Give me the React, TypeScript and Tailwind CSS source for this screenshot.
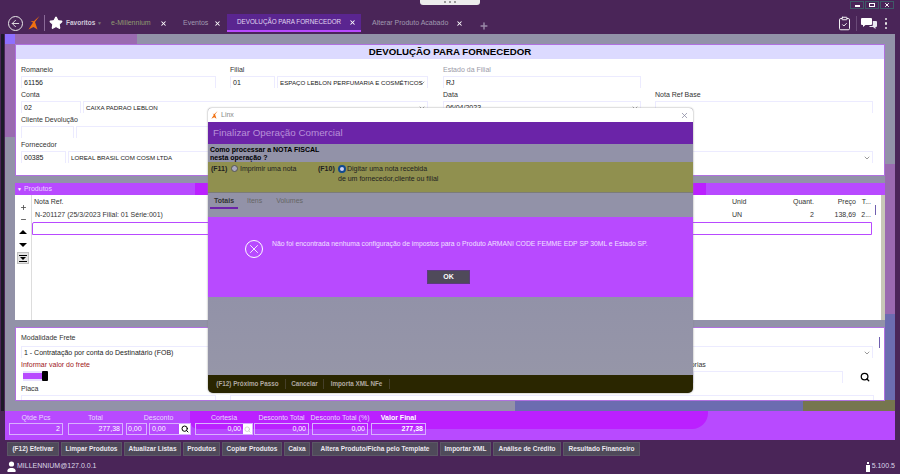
import React from "react";
import { X, Plus, Minus, ChevronDown, Search, Star, ArrowLeft, ClipboardCheck } from "lucide-react";

const F = ({ label, className = "", muted = false, children }: { label: string; className?: string; muted?: boolean; children?: React.ReactNode }) => (
  <div className={"flex flex-col min-w-0 " + className}>
    <div className={"h-[12px] text-[7px] leading-[12px] whitespace-nowrap " + (muted ? "text-[#9a9aa8]" : "text-[#333]")}>{label}</div>
    <div className="flex gap-[2px] h-[13px]">{children}</div>
  </div>
);

const Box = ({ v = "", className = "", chevron = false }: { v?: string; className?: string; chevron?: boolean }) => (
  <div className={"relative h-[12px] border-t border-l border-r border-[#ecebff] pl-[2px] leading-[12px] text-[#222] whitespace-nowrap overflow-hidden " + (className.includes("text-[") ? "" : "text-[7px] ") + className}>
    {v}
    {chevron && <ChevronDown size={8} strokeWidth={2} className="absolute right-[1px] top-[2px] text-[#666]" />}
  </div>
);

const Logo = ({ w, h }: { w: number; h: number }) => (
  <svg width={w} height={h} viewBox="0 0 12 14">
    <path d="M11.5 0 L7 6 L9.5 13.5 L5.5 11 L0.5 13.5 L5 6.5 L2.5 5 L5.8 5.2 Z" fill="#f07010" />
  </svg>
);

const buttons: [string, string][] = [
  ["(F12) Efetivar", "w-[52px]"],
  ["Limpar Produtos", "w-[61px]"],
  ["Atualizar Listas", "w-[57px]"],
  ["Produtos", "w-[37px]"],
  ["Copiar Produtos", "w-[60px]"],
  ["Caixa", "w-[26px]"],
  ["Altera Produto/Ficha pelo Template", "w-[126px]"],
  ["Importar XML", "w-[51px]"],
  ["Análise de Crédito", "w-[68px]"],
  ["Resultado Financeiro", "w-[77px]"],
];

const SumField = ({ l, v, w, bold = false }: { l: string; v: string; w: string; bold?: boolean }) => (
  <div className={"flex flex-col items-center shrink-0 " + w}>
    <div className={"h-[11px] text-[7px] leading-[11px] whitespace-nowrap " + (bold ? "text-white font-bold" : "text-[#e8d8ff]")}>{l}</div>
    <div className={"w-full h-[12px] border border-[#d8b0ff] text-right pr-[2px] text-[7px] leading-[10px] " + (bold ? "text-white font-bold" : "text-white")}>{v}</div>
  </div>
);

export default function App() {
  return (
    <div className="relative w-[900px] h-[474px] overflow-hidden flex flex-col bg-[#4a2558] font-['Liberation_Sans',sans-serif]">
      {/* title bar */}
      <div className="relative h-[34px] shrink-0 flex items-end pb-[2px] pl-[8px]">
        <div className="absolute top-0 left-[420px] w-[60px] h-[5px] bg-[#ececec] rounded-b-[3px] flex justify-center gap-[3px] pt-[1px]">
          <span className="w-[2px] h-[2px] bg-[#999]" />
          <span className="w-[2px] h-[2px] bg-[#999]" />
          <span className="w-[2px] h-[2px] bg-[#999]" />
        </div>
        <div className="absolute top-[1px] right-[6px] flex gap-[1px]">
          {[0, 1, 2].map((s) => (
            <div key={s} className="w-[14px] h-[8px] border border-[#3f5a68] flex items-center justify-center">
              {s === 0 && <div className="w-[5px] h-[2px] bg-white mt-[2px]" />}
              {s === 1 && <div className="w-[6px] h-[4px] border border-white" />}
              {s === 2 && <X size={6} strokeWidth={4} className="text-white" />}
            </div>
          ))}
        </div>
        <div className="w-[15px] h-[15px] mb-[1px] rounded-full border border-[#e8e8e8] flex items-center justify-center shrink-0">
          <ArrowLeft size={11} className="text-[#e8e8e8]" />
        </div>
        <div className="ml-[5px] mb-[2px] shrink-0 w-[12px] h-[14px] flex"><Logo w={12} h={14} /></div>
        <div className="w-[1px] h-[16px] bg-[#8a6a98] ml-[4px] mb-[1px]" />
        <Star size={14} fill="#fff" className="text-white ml-[4px] mb-[2px] shrink-0" />
        <div className="ml-[3px] w-[45px] h-[18px] text-[#d0c8d8] text-[6.5px] font-bold leading-[18px] shrink-0 whitespace-nowrap">
          Favoritos <span className="text-[5px] text-[#777]">▼</span>
        </div>
        <div className="flex items-center justify-between h-[18px] w-[72px] pr-[16px] shrink-0">
          <span className="text-[7px] whitespace-nowrap text-[#8f9b70]">e-Millennium</span>
          <X size={7} strokeWidth={3.5} className="text-white shrink-0" />
        </div>
        <div className="flex items-center justify-between h-[18px] w-[44px] pr-[6px] shrink-0">
          <span className="text-[7px] whitespace-nowrap text-[#a09ab0]">Eventos</span>
          <X size={7} strokeWidth={3.5} className="text-white shrink-0" />
        </div>
        <div className="flex items-center justify-between h-[18px] w-[134px] bg-[#5a2590] border-b-[2px] border-[#b84aff] pl-[10px] pr-[5px] shrink-0">
          <span className="text-[6.3px] text-[#e0d8f0] whitespace-nowrap">DEVOLUÇÃO PARA FORNECEDOR</span>
          <X size={7} strokeWidth={3.5} className="text-white shrink-0" />
        </div>
        <div className="flex items-center h-[18px] pl-[11px] shrink-0">
          <span className="text-[7px] text-[#a09ab0] whitespace-nowrap w-[84px]">Alterar Produto Acabado</span>
          <X size={7} strokeWidth={3.5} className="text-white shrink-0" />
          <Plus size={10} strokeWidth={3.5} className="text-[#9a8aa8] ml-[16px] mt-[5px] shrink-0" />
        </div>
        <div className="ml-auto flex items-center pr-[13px] mb-[1px] text-white">
          <ClipboardCheck size={15} strokeWidth={1.5} />
          <div className="w-[1px] h-[15px] bg-[#6a4a78] ml-[4px] mr-[4px]" />
          <svg width="16" height="11" viewBox="0 0 16 11" className="mr-[8px]">
            <path d="M1 0h9a1 1 0 0 1 1 1v5a1 1 0 0 1-1 1H4.5L2 9V7H1a1 1 0 0 1-1-1V1a1 1 0 0 1 1-1Z" fill="#fff" />
            <path d="M11.8 3H15a1 1 0 0 1 1 1v4a1 1 0 0 1-1 1h-.5v2l-2.5-2H8.5V8H11a1 1 0 0 0 .8-1Z" fill="#e8e8f0" />
          </svg>
          <div className="flex flex-col gap-[2px]">
            <span className="w-[2.5px] h-[2.5px] bg-[#e8e8e8] rounded-full" />
            <span className="w-[2.5px] h-[2.5px] bg-[#e8e8e8] rounded-full" />
            <span className="w-[2.5px] h-[2.5px] bg-[#e8e8e8] rounded-full" />
          </div>
        </div>
      </div>

      {/* content */}
      <div className="flex h-[377px] shrink-0">
        <div className="w-[1px]" />
        <div className="w-[3px] bg-[#1c1a28]" />
        <div className="w-[1px]" />
        <div className="w-[890px] flex bg-[#9292a8]">
          <div className="w-[10px] bg-[linear-gradient(to_bottom,#8f6fff_0,#8f6fff_10px,#9a6ab0_10px,#9a6ab0_103px,#9292a8_103px)]" />
          <div className="w-[870px] flex flex-col">
            <div className="h-[10px] flex">
              <div className="w-[122px] bg-[#9a6ab0]" />
            </div>
            {/* panel 1 */}
            <div className="h-[132px] bg-white border border-[#b070e0] shrink-0">
              <div className="h-[14px] bg-[#dcdaff] text-center text-[9.7px] font-bold leading-[14px] text-black">DEVOLUÇÃO PARA FORNECEDOR</div>
              <div className="pl-[5px] pt-[5px] grid grid-cols-[209px_213px_212px_218px] auto-rows-[25px]">
                <F label="Romaneio"><Box v="61156" className="w-[195px]" /></F>
                <F label="Filial"><Box v="01" className="w-[45px]" /><Box v="ESPAÇO LEBLON PERFUMARIA E COSMÉTICOS" chevron className="w-[151px] text-[6.2px]" /></F>
                <F label="Estado da Filial" muted><Box v="RJ" className="w-[198px]" /></F>
                <div />
                <F label="Conta" className="col-span-2"><Box v="02" className="w-[60px]" /><Box v="CAIXA PADRAO LEBLON" chevron className="w-[345px] text-[6.2px]" /></F>
                <F label="Data"><Box v="06/04/2023" chevron className="w-[198px]" /></F>
                <F label="Nota Ref Base"><Box className="w-[218px]" /></F>
                <F label="Cliente Devolução" className="col-span-4"><Box className="w-[53px]" /><Box className="w-[340px]" /></F>
                <F label="Fornecedor" className="col-span-4"><Box v="00385" className="w-[45px]" /><Box v="LOREAL BRASIL COM COSM LTDA" chevron className="w-[805px] text-[6.2px]" /></F>
              </div>
            </div>
            <div className="h-[7px] shrink-0" />
            {/* produtos */}
            <div className="h-[137px] shrink-0 flex flex-col">
              <div className="h-[12px] bg-[#b84aff] flex items-center pl-[2px] shrink-0">
                <span className="text-white text-[5px] leading-[12px]">▼</span>
                <span className="text-[7px] text-[#e8d8ff] leading-[12px] ml-[2px] w-[171px]">Produtos</span>
                <div className="w-[511px] h-full bg-[#bb20ff]" />
              </div>
              <div className="flex-1 flex bg-white min-h-0">
                <div className="w-[17px] shrink-0 border-r border-[#ddd] flex flex-col items-center pt-[9px] text-black">
                  <Plus size={7} strokeWidth={3} className="text-[#555] mb-[5px]" />
                  <Minus size={7} strokeWidth={3} className="text-[#555] mb-[7px]" />
                  <div className="w-0 h-0 border-x-[4px] border-x-transparent border-b-[4px] border-b-black mb-[9px]" />
                  <div className="w-0 h-0 border-x-[4px] border-x-transparent border-t-[4px] border-t-black mb-[5px]" />
                  <div className="w-[12px] h-[12px] bg-[#e4e4e4] border border-[#c0c0c0] flex flex-col items-center justify-center gap-[1px]">
                    <div className="w-[8px] h-[1px] bg-black" />
                    <div className="w-0 h-0 border-x-[3px] border-x-transparent border-t-[3px] border-t-black" />
                    <div className="w-[8px] h-[1px] bg-black" />
                  </div>
                </div>
                <div className="flex-1 flex flex-col min-w-0">
                  <div className="h-[13px] flex items-center text-[7px] text-[#333] pl-[2px] mt-[1px]">
                    <span className="w-[698px]">Nota Ref.</span>
                    <span className="w-[49px]">Unid</span>
                    <span className="w-[33px] text-right">Quant.</span>
                    <span className="w-[42px] text-right">Preço</span>
                    <span className="w-[15px] text-right">T...</span>
                  </div>
                  <div className="h-[13px] flex items-center text-[7px] text-[#333] pl-[3px]">
                    <span className="w-[697px]">N-201127 (25/3/2023 Filial: 01 Série:001)</span>
                    <span className="w-[49px]">UN</span>
                    <span className="w-[33px] text-right">2</span>
                    <span className="w-[42px] text-right">138,69</span>
                    <span className="w-[15px] text-right">2...</span>
                  </div>
                  <div className="h-[13px] w-[840px] border border-[#b84aff] rounded-tl-[2px]" />
                </div>
                <div className="w-[14px] shrink-0 flex">
                  <div className="w-[1px] h-[10px] bg-[#7060b0] mt-[10px] ml-[4px]" />
                  <div className="ml-auto w-[4px] bg-[#c8c8b8]" />
                </div>
              </div>
            </div>
            <div className="h-[7px] shrink-0" />
            {/* bottom panel */}
            <div className="h-[74px] shrink-0 bg-white border border-[#b070e0] pl-[5px] relative overflow-hidden">
              <div className="h-[18px] pt-[4px] text-[7px] leading-[12px] text-[#333]">Modalidade Frete</div>
              <Box v="1 - Contratação por conta do Destinatário (FOB)" chevron className="w-[852px] h-[12px] leading-[11px]" />
              <div className="flex mt-[1px]">
                <div className="w-[672px] shrink-0">
                  <div className="h-[11px] text-[7px] leading-[11px] text-[#a02020]">Informar valor do frete</div>
                  <div className="mt-[1px] ml-[2px] w-[25px] h-[10px] bg-[#e8e0ff] flex items-center">
                    <div className="w-[19px] h-[6px] bg-[#b84aff]" />
                    <div className="w-[6px] h-[10px] bg-black rounded-[1px]" />
                  </div>
                </div>
                <div className="flex flex-col">
                  <div className="h-[11px] text-[7px] leading-[11px] text-[#333] -ml-[21px] whitespace-nowrap">Categorias</div>
                  <div className="flex items-center mt-[1px]">
                    <Box className="w-[150px]" />
                    <Search size={10} strokeWidth={3} className="text-black ml-[17px]" />
                  </div>
                </div>
              </div>
              <div className="h-[10px] text-[7px] leading-[10px] text-[#333] mt-[1px]">Placa</div>
              <div className="flex gap-[14px] mt-[1px]">
                <Box className="w-[195px]" />
                <Box className="w-[644px]" />
              </div>
              <div className="absolute right-[4px] top-[9px] w-[1px] h-[11px] bg-[#7060b0]" />
            </div>
            <div className="flex-1 flex">
              <div className="w-[500px]" />
              <div className="flex-1 bg-[#6c6cb0]" />
              <div className="w-[82px] bg-[#76764f]" />
            </div>
          </div>
          <div className="w-[10px] bg-[linear-gradient(to_bottom,#9292a8_0,#9292a8_130px,#9a6ab0_130px,#9a6ab0_280px,#6c6cb0_280px,#6c6cb0_366px,#76764f_366px)]" />
        </div>
      </div>

      {/* summary */}
      <div className="relative ml-[5px] w-[890px] h-[29px] shrink-0 bg-[#b84aff] overflow-hidden">
        <div className="absolute left-[185px] top-0 w-[518px] h-[18px] bg-[#bb20ff] rounded-br-[16px] rounded-bl-[8px]" />
        <div className="relative flex pl-[4px] pt-[1px]">
          <SumField l="Qtde Pcs" v="2" w="w-[54px]" />
          <SumField l="Total" v="277,38" w="w-[55px] ml-[5px]" />
          <div className="flex flex-col shrink-0 w-[65px] ml-[3px]">
            <div className="h-[11px] text-center text-[7px] leading-[11px] text-[#e8d8ff]">Desconto</div>
            <div className="flex gap-[2px]">
              <div className="w-[21px] h-[12px] border border-[#d8b0ff] pl-[1px] text-[7px] leading-[10px] text-white">0,00</div>
              <div className="w-[42px] h-[12px] border border-[#d8b0ff] pl-[2px] text-[7px] leading-[10px] text-white flex justify-between">
                0,00
                <span className="bg-white w-[11px] h-[10px] flex items-center justify-center"><Search size={8} strokeWidth={3} className="text-black" /></span>
              </div>
            </div>
          </div>
          <div className="flex flex-col items-center shrink-0 w-[58px] ml-[4px]">
            <div className="h-[11px] text-[7px] leading-[11px] text-[#e8d8ff]">Cortesia</div>
            <div className="w-full h-[12px] border border-[#d8b0ff] text-[7px] leading-[10px] text-white flex justify-end gap-[2px]">
              0,00
              <span className="bg-white w-[9px] h-[10px] flex items-center justify-center"><Search size={7} strokeWidth={2} className="text-[#bbb]" /></span>
            </div>
          </div>
          <SumField l="Desconto Total" v="0,00" w="w-[55px] ml-[1px]" />
          <SumField l="Desconto Total (%)" v="0,00" w="w-[56px] ml-[3px]" />
          <SumField l="Valor Final" v="277,38" w="w-[55px] ml-[3px]" bold />
        </div>
      </div>

      {/* buttons */}
      <div className="h-[14px] mt-[2px] shrink-0 flex items-center pl-[7px] gap-[2px]">
        {buttons.map(([b, w]) => (
          <div key={b} className={"h-[14px] shrink-0 bg-[#4f4a5a] border border-[#5c5766] text-[#ece8f0] text-[6.5px] font-bold leading-[12px] text-center whitespace-nowrap overflow-hidden " + w}>{b}</div>
        ))}
      </div>

      {/* status */}
      <div className="flex-1 flex items-center pl-[7px] pr-[3px] pt-[3px] text-[#ddd8e8] text-[7px]">
        <svg width="9" height="11" viewBox="0 0 9 11" className="shrink-0">
          <circle cx="4.5" cy="3" r="2.6" fill="#fff" />
          <path d="M0.5 11V9.2C0.5 7.5 3 7 4.5 7S8.5 7.5 8.5 9.2V11Z" fill="#fff" />
        </svg>
        <span className="ml-[1px]">MILLENNIUM@127.0.0.1</span>
        <svg width="4" height="10" viewBox="0 0 4 10" className="ml-auto shrink-0">
          <rect x="1" y="0" width="2" height="2" fill="#fff" />
          <rect x="0" y="3" width="4" height="7" fill="#fff" />
        </svg>
        <span className="ml-[2px] mr-[2px]">5.100.5</span>
      </div>

      {/* modal */}
      <div className="absolute left-[208px] top-[108px] w-[485px] h-[285px] rounded-t-[4px] rounded-b-[5px] overflow-hidden flex flex-col bg-[#9292a8] shadow-[0_0_2px_#888]">
        <div className="h-[14px] bg-white flex items-center pl-[3px] pr-[4px] shrink-0">
          <Logo w={7} h={8} />
          <span className="ml-[3px] text-[7px] text-[#888]">Linx</span>
          <X size={9} className="ml-auto text-[#8888a0]" />
        </div>
        <div className="h-[22px] bg-[#6b24a8] shrink-0 pl-[5px] text-[9.8px] leading-[22px] text-[#b890d8]">Finalizar Operação Comercial</div>
        <div className="h-[18px] shrink-0 pl-[2px] pt-[2px] text-[7px] leading-[8px] font-bold text-black">Como processar a NOTA FISCAL<br />nesta operação ?</div>
        <div className="h-[31px] bg-[#90904f] border-b border-[#7c7c78] shrink-0 flex items-start pt-[2px] text-[7px] leading-[10px] text-[#222]">
          <span className="ml-[3px] w-[18px] font-bold">(F11)</span>
          <span className="ml-[2px] mt-[1px] w-[7px] h-[7px] rounded-full border border-[#555] bg-[#a8a8c0] shrink-0" />
          <span className="ml-[2px] w-[78px]">Imprimir uma nota</span>
          <span className="w-[20px] font-bold">(F10)</span>
          <div className="flex flex-col">
            <div className="flex items-start">
              <span className="mt-[1px] w-[8px] h-[8px] rounded-full border-[2px] border-[#104a90] bg-[#d0d0f0] shrink-0" />
              <span className="ml-[1px]">Digitar uma nota recebida</span>
            </div>
            <span>de um fornecedor,cliente ou filial</span>
          </div>
        </div>
        <div className="h-[24px] shrink-0 flex pl-[2px] text-[7px] leading-[14px]">
          <div className="w-[28px] h-[15px] border-b-2 border-[#6b24a8] text-center font-bold text-[#333] mt-[1px]">Totais</div>
          <div className="ml-[9px] mt-[1px] text-[#666]">Itens</div>
          <div className="ml-[14px] mt-[1px] text-[#666]">Volumes</div>
        </div>
        <div className="h-[80px] bg-[#b84aff] shrink-0 flex flex-col">
          <div className="flex pt-[23px] pl-[37px] h-[53px]">
            <div className="w-[18px] h-[18px] shrink-0 rounded-full border-[1.5px] border-white flex items-center justify-center">
              <X size={14} strokeWidth={1.5} className="text-white" />
            </div>
            <div className="ml-[9px] -mt-[2px] text-[6.8px] text-[#f0e0ff] leading-[12px] whitespace-nowrap">Não foi encontrada nenhuma configuração de impostos para o Produto ARMANI CODE FEMME EDP SP 30ML e Estado SP.</div>
          </div>
          <div className="ml-[219px] w-[43px] h-[14px] bg-[#4f4a5a] border border-[#5c3a80] text-white text-[7px] font-bold text-center leading-[12px]">OK</div>
        </div>
        <div className="flex-1 bg-[linear-gradient(to_bottom,#9292a8,#9696a8)]" />
        <div className="h-[18px] bg-[#2a2600] shrink-0 flex items-center pl-[2px] text-[6.3px] text-[#b0a8a0]">
          <div className="w-[76px] text-center font-bold border-r border-[#45402a] whitespace-nowrap">(F12) Próximo Passo</div>
          <div className="w-[38px] text-center font-bold border-r border-[#45402a] whitespace-nowrap">Cancelar</div>
          <div className="w-[66px] text-center font-bold border-r border-[#45402a] whitespace-nowrap">Importa XML NFe</div>
        </div>
      </div>
    </div>
  );
}
